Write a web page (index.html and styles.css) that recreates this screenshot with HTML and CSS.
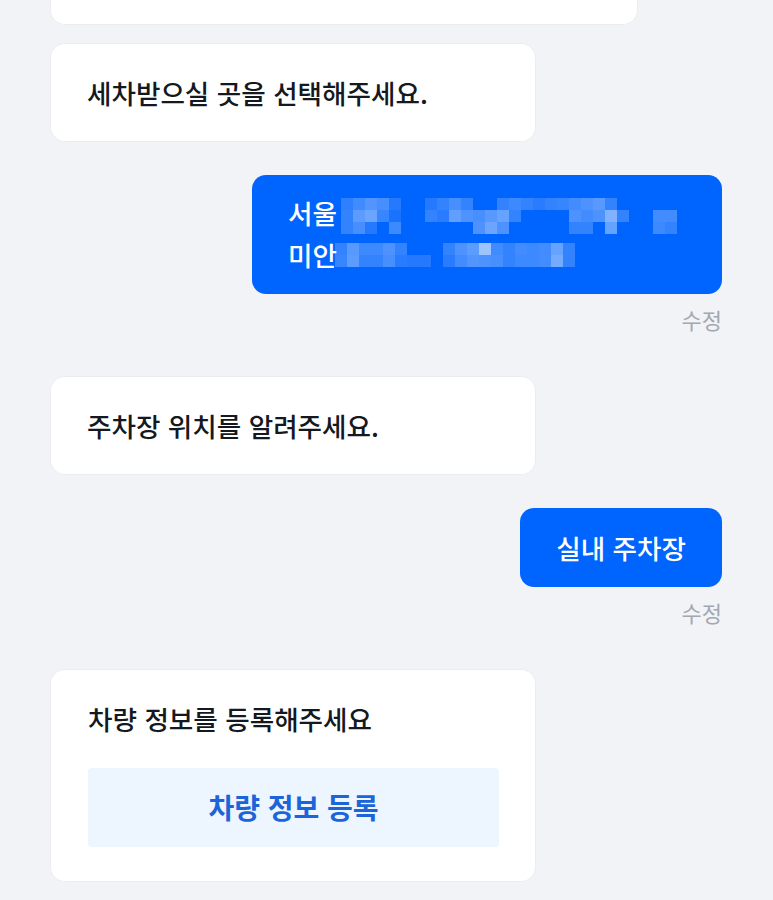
FILE: index.html
```html
<!DOCTYPE html>
<html lang="ko">
<head>
<meta charset="utf-8">
<link rel="stylesheet" href="styles.css">
</head>
<body>
<div class="chat">
  <div class="card card-top"></div>

  <div class="card bot">세차받으실 곳을 선택해주세요.</div>

  <div class="user">
    <div class="bubble bubble-multi">
      <div class="line line-1"><span>서울&nbsp;</span><svg class="pix" width="348" height="36" viewBox="0 0 348 36">
        <g fill="#fff">
          <rect x="0" y="0" width="12" height="12" opacity=".18"/><rect x="12" y="0" width="12" height="12" opacity=".25"/><rect x="24" y="0" width="12" height="12" opacity=".32"/><rect x="36" y="0" width="12" height="12" opacity=".28"/><rect x="48" y="0" width="12" height="12" opacity=".14"/>
          <rect x="84" y="0" width="12" height="12" opacity=".14"/><rect x="96" y="0" width="12" height="12" opacity=".2"/><rect x="108" y="0" width="12" height="12" opacity=".28"/><rect x="120" y="0" width="12" height="12" opacity=".2"/>
          <rect x="156" y="0" width="12" height="12" opacity=".2"/><rect x="168" y="0" width="12" height="12" opacity=".24"/><rect x="180" y="0" width="12" height="12" opacity=".2"/><rect x="192" y="0" width="12" height="12" opacity=".16"/><rect x="204" y="0" width="12" height="12" opacity=".2"/><rect x="216" y="0" width="12" height="12" opacity=".22"/>
          <rect x="228" y="0" width="12" height="12" opacity=".26"/><rect x="240" y="0" width="12" height="12" opacity=".3"/><rect x="252" y="0" width="12" height="12" opacity=".34"/><rect x="264" y="0" width="12" height="12" opacity=".2"/>
          <rect x="0" y="12" width="12" height="12" opacity=".2"/><rect x="12" y="12" width="12" height="12" opacity=".36"/><rect x="24" y="12" width="12" height="12" opacity=".42"/><rect x="36" y="12" width="12" height="12" opacity=".22"/><rect x="48" y="12" width="12" height="12" opacity=".1"/>
          <rect x="84" y="12" width="12" height="12" opacity=".2"/><rect x="96" y="12" width="12" height="12" opacity=".16"/><rect x="108" y="12" width="12" height="12" opacity=".38"/><rect x="120" y="12" width="12" height="12" opacity=".3"/><rect x="132" y="12" width="12" height="12" opacity=".28"/><rect x="144" y="12" width="12" height="12" opacity=".34"/><rect x="156" y="12" width="12" height="12" opacity=".4"/><rect x="168" y="12" width="12" height="12" opacity=".2"/>
          <rect x="228" y="12" width="12" height="12" opacity=".3"/><rect x="240" y="12" width="12" height="12" opacity=".26"/><rect x="252" y="12" width="12" height="12" opacity=".3"/><rect x="264" y="12" width="12" height="12" opacity=".5"/><rect x="276" y="12" width="12" height="12" opacity=".2"/>
          <rect x="312" y="12" width="12" height="12" opacity=".26"/><rect x="324" y="12" width="12" height="12" opacity=".26"/>
          <rect x="0" y="24" width="12" height="12" opacity=".2"/><rect x="12" y="24" width="12" height="12" opacity=".28"/><rect x="24" y="24" width="12" height="12" opacity=".14"/><rect x="48" y="24" width="12" height="12" opacity=".24"/>
          <rect x="132" y="24" width="12" height="12" opacity=".3"/><rect x="144" y="24" width="12" height="12" opacity=".42"/><rect x="156" y="24" width="12" height="12" opacity=".3"/>
          <rect x="228" y="24" width="12" height="12" opacity=".2"/><rect x="240" y="24" width="12" height="12" opacity=".2"/><rect x="264" y="24" width="12" height="12" opacity=".4"/>
          <rect x="312" y="24" width="12" height="12" opacity=".24"/><rect x="324" y="24" width="12" height="12" opacity=".2"/>
        </g>
      </svg></div>
      <div class="line line-2"><span>미안</span><svg class="pix" width="252" height="26" viewBox="0 0 252 26">
        <g fill="#fff">
          <rect x="0" y="1" width="12" height="12" opacity=".2"/><rect x="12" y="1" width="12" height="12" opacity=".34"/><rect x="24" y="1" width="12" height="12" opacity=".24"/><rect x="36" y="1" width="12" height="12" opacity=".24"/><rect x="48" y="1" width="12" height="12" opacity=".3"/><rect x="60" y="1" width="12" height="12" opacity=".2"/>
          <rect x="108" y="1" width="12" height="12" opacity=".2"/><rect x="120" y="1" width="12" height="12" opacity=".3"/><rect x="132" y="1" width="12" height="12" opacity=".36"/><rect x="144" y="1" width="12" height="12" opacity=".62"/><rect x="156" y="1" width="12" height="12" opacity=".25"/><rect x="168" y="1" width="12" height="12" opacity=".2"/>
          <rect x="180" y="1" width="12" height="12" opacity=".26"/><rect x="192" y="1" width="12" height="12" opacity=".24"/><rect x="204" y="1" width="12" height="12" opacity=".26"/><rect x="216" y="1" width="12" height="12" opacity=".4"/><rect x="228" y="1" width="12" height="12" opacity=".2"/>
          <rect x="0" y="13" width="12" height="12" opacity=".22"/><rect x="12" y="13" width="12" height="12" opacity=".36"/><rect x="24" y="13" width="12" height="12" opacity=".2"/><rect x="36" y="13" width="12" height="12" opacity=".2"/><rect x="48" y="13" width="12" height="12" opacity=".28"/><rect x="60" y="13" width="12" height="12" opacity=".16"/><rect x="72" y="13" width="12" height="12" opacity=".14"/><rect x="84" y="13" width="12" height="12" opacity=".14"/>
          <rect x="108" y="13" width="12" height="12" opacity=".16"/><rect x="120" y="13" width="12" height="12" opacity=".26"/><rect x="132" y="13" width="12" height="12" opacity=".32"/><rect x="144" y="13" width="12" height="12" opacity=".3"/><rect x="156" y="13" width="12" height="12" opacity=".28"/><rect x="168" y="13" width="12" height="12" opacity=".2"/>
          <rect x="180" y="13" width="12" height="12" opacity=".24"/><rect x="192" y="13" width="12" height="12" opacity=".24"/><rect x="204" y="13" width="12" height="12" opacity=".26"/><rect x="216" y="13" width="12" height="12" opacity=".46"/><rect x="228" y="13" width="12" height="12" opacity=".2"/>
        </g>
      </svg></div>
    </div>
    <span class="edit">수정</span>
  </div>

  <div class="card bot">주차장 위치를 알려주세요.</div>

  <div class="user">
    <div class="bubble">실내 주차장</div>
    <span class="edit">수정</span>
  </div>

  <div class="card bot card-action">
    <div class="card-title">차량 정보를 등록해주세요</div>
    <div class="action-btn">차량 정보 등록</div>
  </div>
</div>
</body>
</html>
```

FILE: styles.css
```css
* { box-sizing: border-box; }

html, body {
  margin: 0;
  padding: 0;
  background: #f2f3f7;
}

body {
  font-family: "Noto Sans CJK KR", "Noto Sans", sans-serif;
  color: #141820;
  height: 900px;
  overflow: hidden;
}

.chat {
  display: flex;
  flex-direction: column;
  padding: 0 51px;
}

.card {
  background: #ffffff;
  border-radius: 14px;
  box-shadow: 0 0 0 1px rgba(0, 0, 0, 0.025);
}

.card-top {
  width: 586px;
  height: 60px;
  margin-top: -36px;
  margin-bottom: 20px;
}

.bot {
  width: 484px;
  padding: 30px 36px;
  font-size: 26.6px;
  line-height: 37px;
  font-weight: 500;
  letter-spacing: 0;
  margin-bottom: 34px;
}

.user {
  display: flex;
  flex-direction: column;
  align-items: flex-end;
  margin-bottom: 44px;
}

.bubble {
  background: #0064ff;
  color: #ffffff;
  border-radius: 14px;
  padding: 21px 36px;
  font-size: 26.6px;
  line-height: 37px;
  font-weight: 500;
}

.bubble-multi {
  width: 470px;
  padding: 17px 36px 18px;
  line-height: 42px;
}

.line {
  display: flex;
  align-items: flex-start;
  height: 42px;
  white-space: nowrap;
}

.line .pix {
  display: block;
  flex: none;
}

.line-1 .pix {
  margin-top: 6px;
  margin-left: -3px;
}

.line-2 .pix {
  margin-top: 8px;
  margin-left: -2px;
}

.edit {
  margin-top: 11px;
  font-size: 22px;
  line-height: 28px;
  color: #a3a8b0;
}

.card-action {
  padding: 30px 36px 34px 37px;
}

.card-title {
  line-height: 37px;
}

.action-btn {
  margin-top: 31px;
  height: 79px;
  display: flex;
  align-items: center;
  justify-content: center;
  background: #edf5ff;
  border-radius: 4px;
  color: #1b64da;
  font-size: 28px;
  font-weight: 700;
}
```
